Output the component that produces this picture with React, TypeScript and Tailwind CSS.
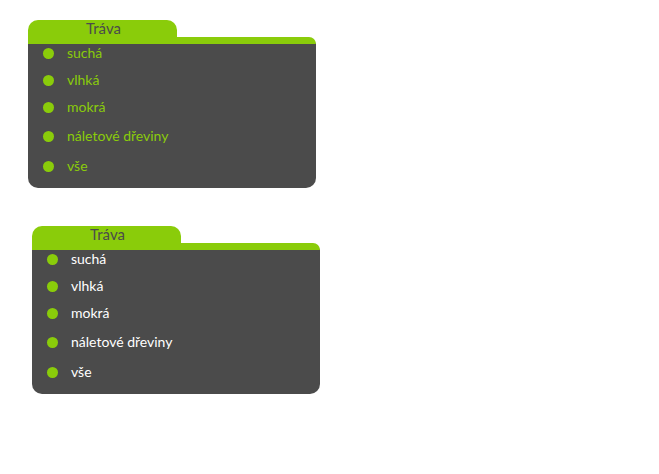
type Item = { label: string; spacing: string };

const items: Item[] = [
  { label: "suchá", spacing: "" },
  { label: "vlhká", spacing: "mt-2" },
  { label: "mokrá", spacing: "mt-2" },
  { label: "náletové dřeviny", spacing: "mt-2.5" },
  { label: "vše", spacing: "mt-[11px]" },
];

function FolderCard({ title, textClass }: { title: string; textClass: string }) {
  return (
    <section className="w-full max-w-72">
      <h2 className="flex h-[17px] w-[149px] justify-center rounded-t-[10px] bg-[#8acc0a] pl-0.5 text-[15px] leading-[17px] font-normal text-[#4b4b4b]">
        {title}
      </h2>
      <div className="overflow-hidden rounded-tr-[7px] rounded-b-[10px] border-t-[7px] border-[#8acc0a] bg-[#4b4b4b] pb-3">
        <ul className="pl-[15px]">
          {items.map((item) => (
            <li
              key={item.label}
              className={`flex h-[19px] items-center gap-[13px] text-[14px] leading-[17px] ${textClass} ${item.spacing}`}
            >
              <span className="size-[11px] shrink-0 rounded-full bg-[#8acc0a]" />
              <span className="pb-0.5">{item.label}</span>
            </li>
          ))}
        </ul>
      </div>
    </section>
  );
}

export default function App() {
  return (
    <main className="flex min-h-screen flex-col gap-[38px] bg-white px-7 py-5 font-['Lato','Noto_Sans',sans-serif]">
      <FolderCard title="Tráva" textClass="text-[#8acc0a]" />
      <div className="pl-1">
        <FolderCard title="Tráva" textClass="text-white" />
      </div>
    </main>
  );
}
